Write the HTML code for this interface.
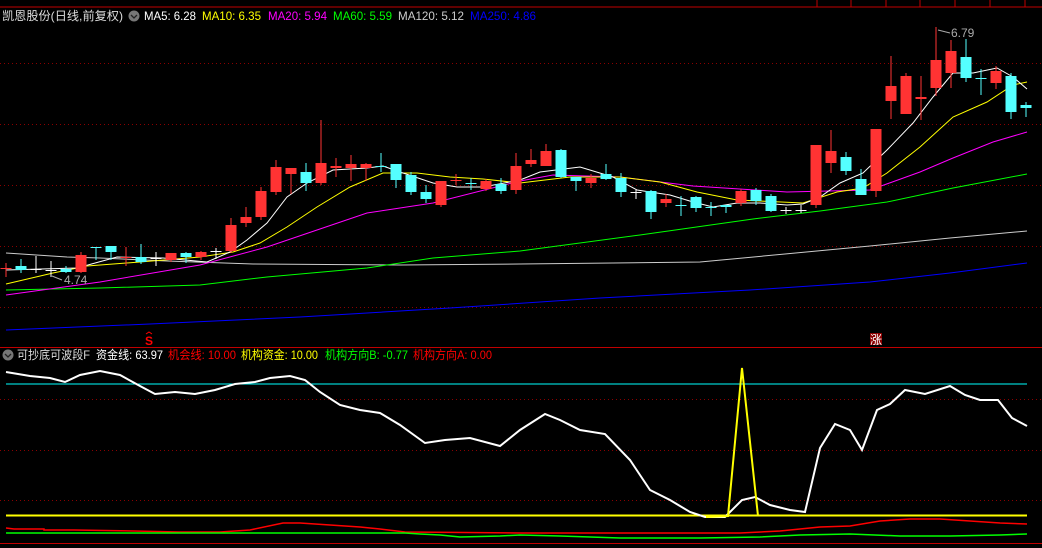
<!DOCTYPE html>
<html><head><meta charset="utf-8"><style>
html,body{margin:0;padding:0;background:#000;width:1042px;height:548px;overflow:hidden}
svg{display:block}
text{font-family:"Liberation Sans","Noto Sans CJK SC",sans-serif;font-size:12px}
</style></head><body>
<svg id="s" width="1042" height="548" xmlns="http://www.w3.org/2000/svg">
<rect width="1042" height="548" fill="#000"/>
<g stroke="#8b0000" stroke-dasharray="1,3" stroke-width="1">
<line x1="0" y1="63.5" x2="1042" y2="63.5"/><line x1="0" y1="124.5" x2="1042" y2="124.5"/>
<line x1="0" y1="185.5" x2="1042" y2="185.5"/><line x1="0" y1="246.5" x2="1042" y2="246.5"/>
<line x1="0" y1="307.5" x2="1042" y2="307.5"/>
<line x1="0" y1="399.5" x2="1042" y2="399.5"/><line x1="0" y1="450.5" x2="1042" y2="450.5"/>
<line x1="0" y1="500.5" x2="1042" y2="500.5"/>
</g>
<line x1="0" y1="7" x2="1042" y2="7" stroke="#c00000"/>
<line x1="0" y1="347.5" x2="1042" y2="347.5" stroke="#c00000"/>
<line x1="0" y1="543.5" x2="1042" y2="543.5" stroke="#c00000"/>
<g stroke="#c00000"><line x1="817" y1="0" x2="817" y2="7"/><line x1="851" y1="0" x2="851" y2="7"/><line x1="886" y1="0" x2="886" y2="7"/><line x1="920" y1="0" x2="920" y2="7"/><line x1="955" y1="0" x2="955" y2="7"/><line x1="990" y1="0" x2="990" y2="7"/><line x1="1025" y1="0" x2="1025" y2="7"/></g>
<g id="ma" fill="none" stroke-width="1"></g>
<g id="cd"></g>
<text x="2" y="20" fill="#ddd" textLength="121" lengthAdjust="spacingAndGlyphs">凯恩股份(日线,前复权)</text>
<circle cx="134" cy="16" r="5.5" fill="#777"/><path d="M131 15l3 3 3-3" stroke="#222" stroke-width="1.3" fill="none"/>
<text x="144" y="20" fill="#fff" textLength="52" lengthAdjust="spacingAndGlyphs">MA5: 6.28</text>
<text x="202" y="20" fill="#ff0" textLength="59" lengthAdjust="spacingAndGlyphs">MA10: 6.35</text>
<text x="268" y="20" fill="#f0f" textLength="59" lengthAdjust="spacingAndGlyphs">MA20: 5.94</text>
<text x="333" y="20" fill="#0f0" textLength="59" lengthAdjust="spacingAndGlyphs">MA60: 5.59</text>
<text x="398" y="20" fill="#ccc" textLength="66" lengthAdjust="spacingAndGlyphs">MA120: 5.12</text>
<text x="470" y="20" fill="#00f" textLength="66" lengthAdjust="spacingAndGlyphs">MA250: 4.86</text>
<text x="64" y="284" fill="#aaa">4.74</text><path d="M52 276l10 4" stroke="#aaa"/>
<text x="951" y="37" fill="#aaa">6.79</text><path d="M938 30l12 3" stroke="#aaa"/>
<text x="149" y="345" fill="#f00" font-weight="bold" text-anchor="middle">S</text>
<path d="M146 334l3-2 3 2" stroke="#f00" fill="none"/>
<rect x="870" y="333" width="12" height="12" fill="#8b0000"/>
<text x="876" y="344" fill="#fff" font-size="11" text-anchor="middle">涨</text>
<circle cx="8" cy="355" r="5.5" fill="#777"/><path d="M5 354l3 3 3-3" stroke="#222" stroke-width="1.3" fill="none"/>
<text x="17" y="359" fill="#ddd" textLength="73" lengthAdjust="spacingAndGlyphs">可抄底可波段F</text>
<text x="96" y="359" fill="#fff" textLength="67" lengthAdjust="spacingAndGlyphs">资金线: 63.97</text>
<text x="168" y="359" fill="#f00" textLength="68" lengthAdjust="spacingAndGlyphs">机会线: 10.00</text>
<text x="241" y="359" fill="#ff0" textLength="77" lengthAdjust="spacingAndGlyphs">机构资金: 10.00</text>
<text x="325" y="359" fill="#0f0" textLength="83" lengthAdjust="spacingAndGlyphs">机构方向B: -0.77</text>
<text x="413" y="359" fill="#f00" textLength="79" lengthAdjust="spacingAndGlyphs">机构方向A: 0.00</text>
<line x1="6" y1="384" x2="1027" y2="384" stroke="#0ff"/>
<line x1="6" y1="515.5" x2="1027" y2="515.5" stroke="#ff0" stroke-width="2"/>
<polyline fill="none" stroke="#fff" stroke-width="2" points="6,372 30,376 50,378 65,382 80,375 100,371 120,375 140,386 155,394 175,392 195,394 215,390 235,384 255,382 270,378 290,376 305,380 320,392 340,405 360,410 380,413 400,425 425,443 445,440 470,438 500,446 520,430 545,414 560,420 580,430 605,434 630,460 650,490 670,500 690,512 705,517 725,517 742,500 755,497 770,505 790,510 805,512 820,448 835,424 850,430 862,450 877,410 890,404 905,390 925,394 950,386 965,395 980,400 998,400 1012,418 1027,426"/>
<polyline fill="none" stroke="#ff0" stroke-width="2" points="706,517 728,516 742,368 758,516"/>
<polyline fill="none" stroke="#f00" stroke-width="1.5" points="6,528 14,529 44,529 44,530 74,530 134,531 179,532 220,532 250,530 283,523 300,523 330,525 360,527 380,529 405,532 520,533 740,533 780,531 820,527 850,526 880,521 910,519 940,519 970,521 1000,523 1027,524"/>
<polyline fill="none" stroke="#0f0" stroke-width="1.5" points="6,533 405,533 420,534 440,535 460,537 500,536 520,535 560,536 620,538 700,538 760,537 800,535 850,534 900,536 950,536 1000,535 1027,534"/>
</svg>
<script>
var C=[[6,'r',268,268,263,277],[21,'c',266,270,259,273],[36,'w',269,269,256,273],[51,'w',270,270,261,277],[66,'c',269,272,266,273],[81,'r',255,272,252,273],[96,'c',247,248,247,260],[111,'c',246,252,246,260],[126,'r',257,257,247,266],[141,'c',257,262,244,264],[156,'w',258,258,252,266],[171,'r',253,260,253,262],[186,'c',253,257,252,263],[201,'r',252,257,251,260],[216,'w',251,251,248,259],[231,'r',225,251,218,253],[246,'r',217,223,207,227],[261,'r',191,217,187,220],[276,'r',167,192,160,195],[291,'r',168,174,168,194],[306,'c',172,183,163,191],[321,'r',163,183,120,185],[336,'r',166,168,158,177],[351,'r',164,168,155,181],[366,'r',164,168,163,181],[381,'c',166,166,153,172],[396,'c',164,180,164,188],[411,'c',175,192,172,195],[426,'c',192,199,185,203],[441,'r',181,205,181,207],[456,'r',180,180,174,185],[471,'c',183,183,178,190],[486,'r',181,189,179,191],[501,'c',184,191,178,194],[516,'r',166,190,153,194],[531,'r',160,164,149,167],[546,'r',151,166,144,166],[561,'c',150,177,149,178],[576,'c',177,181,177,191],[591,'r',178,183,174,188],[606,'c',174,179,164,180],[621,'c',178,192,173,197],[636,'w',192,192,190,199],[651,'c',191,212,190,219],[666,'r',199,203,194,207],[681,'c',205,205,196,216],[696,'c',197,208,196,212],[711,'c',207,207,202,216],[726,'c',205,207,205,213],[741,'r',191,203,189,206],[756,'c',190,201,188,205],[771,'c',196,211,194,212],[786,'w',210,210,207,214],[801,'w',210,210,205,213],[816,'r',145,205,145,208],[831,'r',151,163,130,173],[846,'c',157,171,152,175],[861,'c',179,195,169,195],[876,'r',129,191,129,197],[891,'r',86,101,56,119],[906,'r',76,114,73,114],[921,'r',97,99,76,120],[936,'r',60,88,27,96],[951,'r',51,73,40,88],[966,'c',57,78,39,82],[981,'c',78,78,69,95],[996,'r',71,83,66,89],[1011,'c',76,112,73,119],[1026,'c',105,108,102,117]];
var col={r:'#ff3333',c:'#54ffff',w:'#ffffff'},h='';
C.forEach(function(c){var f=col[c[1]];h+='<line x1="'+c[0]+'" y1="'+c[4]+'" x2="'+c[0]+'" y2="'+c[5]+'" stroke="'+f+'"/>';var t=c[2],b=c[3];if(b-t<1)b=t+1;h+='<rect x="'+(c[0]-5.5)+'" y="'+t+'" width="11" height="'+(b-t)+'" fill="'+f+'"/>';});
document.getElementById('cd').innerHTML=h;
var M=[['#00f','6,330 150,324 300,317 450,308 600,298 750,290 870,282 950,273 1027,263'],
['#ccc','6,253 67,257 100,258 167,261 253,264 400,265 520,264 700,262 870,246 950,238 1027,231'],
['#0f0','6,290 100,288 200,285 267,277 367,268 433,258 520,251 640,235 753,219 820,211 887,202 953,188 1027,174'],
['#f0f','6,295 100,282 200,265 267,247 317,230 367,213 433,203 520,181 553,175 620,177 693,186 787,192 870,190 920,172 953,158 993,142 1027,132'],
['#ff0','6,284 53,273 87,266 140,262 200,257 233,252 260,243 287,227 317,207 350,187 383,173 417,173 450,177 483,179 520,183 570,177 620,177 660,182 697,192 737,200 803,203 837,192 863,188 887,173 920,147 953,117 987,102 1013,85 1027,82'],
['#fff','6,270 77,268 117,257 163,258 207,262 230,252 247,240 267,223 287,197 307,183 333,170 367,168 383,166 400,172 433,183 457,187 483,187 520,180 540,172 580,167 613,177 637,190 670,195 693,202 713,207 737,203 760,203 787,205 803,204 820,197 840,183 863,173 887,150 913,123 933,97 953,73 973,73 997,68 1013,77 1027,89']];
var g='';M.forEach(function(m){g+='<polyline points="'+m[1]+'" stroke="'+m[0]+'"/>';});
document.getElementById('ma').innerHTML=g;
</script>
</body></html>
